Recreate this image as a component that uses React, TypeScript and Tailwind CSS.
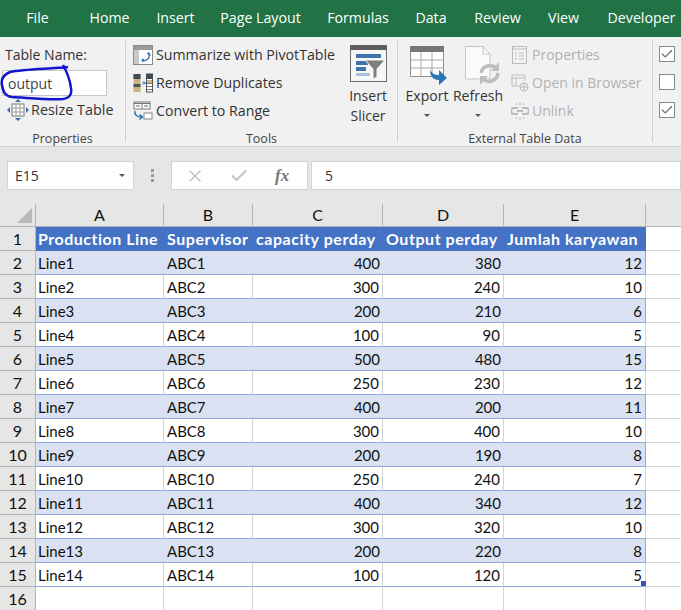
import { X, Check } from "lucide-react";

const rows = [
  ["Line1", "ABC1", 400, 380, 12],
  ["Line2", "ABC2", 300, 240, 10],
  ["Line3", "ABC3", 200, 210, 6],
  ["Line4", "ABC4", 100, 90, 5],
  ["Line5", "ABC5", 500, 480, 15],
  ["Line6", "ABC6", 250, 230, 12],
  ["Line7", "ABC7", 400, 200, 11],
  ["Line8", "ABC8", 300, 400, 10],
  ["Line9", "ABC9", 200, 190, 8],
  ["Line10", "ABC10", 250, 240, 7],
  ["Line11", "ABC11", 400, 340, 12],
  ["Line12", "ABC12", 300, 320, 10],
  ["Line13", "ABC13", 200, 220, 8],
  ["Line14", "ABC14", 100, 120, 5],
];

const tabs = [
  ["File", "w-[75px]"],
  ["Home", "w-[69px]"],
  ["Insert", "w-[63px]"],
  ["Page Layout", "w-[107px]"],
  ["Formulas", "w-[88px]"],
  ["Data", "w-[58px]"],
  ["Review", "w-[75px]"],
  ["View", "w-[57px]"],
  ["Developer", "w-[99px]"],
];

function PivotIcon() {
  return (
    <svg width="20" height="20" viewBox="0 0 20 20" className="shrink-0">
      <rect x="0.5" y="0.5" width="19" height="19" fill="#fff" stroke="#8a8a8a" />
      <rect x="1" y="1" width="18" height="4" fill="#9a9a9a" />
      <rect x="1" y="5" width="5" height="14" fill="#c8c8c8" />
      <path d="M9 15 a5 5 0 0 0 7 -6 M14 9 l2 -1 1 3 M11 14 l-2 1 1 2" fill="none" stroke="#2e75b6" strokeWidth="1.3" />
    </svg>
  );
}

function DuplicatesIcon() {
  return (
    <svg width="20" height="20" viewBox="0 0 20 20" className="shrink-0">
      <rect x="0.5" y="1" width="7" height="18" fill="#c9b37e" />
      <rect x="0.5" y="1" width="7" height="5" fill="#3f4a5a" />
      <rect x="0.5" y="11" width="7" height="3" fill="#4a5565" />
      <rect x="13.5" y="1" width="6" height="18" fill="#fff" stroke="#555" />
      <rect x="13.5" y="1" width="6" height="5" fill="#3f4a5a" />
      <rect x="14" y="7" width="5" height="3" fill="#c9b37e" />
      <path d="M14 10.5h5M14 13.5h5M14 16.5h5" stroke="#777" />
      <path d="M9 10h3M10.5 8.5l2 1.5-2 1.5" fill="none" stroke="#2e75b6" />
    </svg>
  );
}

function ConvertIcon() {
  return (
    <svg width="20" height="20" viewBox="0 0 20 20" className="shrink-0">
      <rect x="1" y="1" width="16" height="7" fill="#fff" stroke="#777" />
      <path d="M1 2.5h16" stroke="#777" />
      <path d="M9 2v6" stroke="#777" />
      <path d="M3 5h4M11 5h4" stroke="#666" />
      <path d="M2 10c-1 4 2 6 7 6M6.5 13.5l3 2.5-3 2.5" fill="none" stroke="#2e75b6" strokeWidth="1.5" />
      <rect x="11" y="12" width="8" height="6" fill="#fff" stroke="#888" />
    </svg>
  );
}

function ResizeIcon() {
  return (
    <svg width="22" height="22" viewBox="0 0 22 22" className="shrink-0">
      <rect x="5" y="5" width="12" height="12" fill="#fff" stroke="#777" />
      <path d="M5 9h12M5 13h12M9 5v12M13 5v12" stroke="#999" />
      <path d="M11 0l3 3H8zM11 22l3-3H8zM0 11l3-3v6zM22 11l-3-3v6z" fill="#3e6fa8" />
    </svg>
  );
}

function SlicerIcon() {
  return (
    <svg width="37" height="37" viewBox="0 0 37 37">
      <rect x="0.5" y="0.5" width="36" height="36" fill="#f7f7f7" stroke="#6d6d6d" />
      <rect x="0" y="0" width="37" height="5" fill="#5f5f5f" />
      <rect x="6" y="9" width="25" height="4" fill="#3f74ad" />
      <rect x="6" y="16" width="12" height="4" fill="#3f74ad" />
      <rect x="6" y="22" width="10" height="4" fill="#3f74ad" />
      <rect x="6" y="28" width="14" height="3" fill="#a9c3de" />
      <path d="M15 15h20l-8 9v8l-4 2v-10z" fill="#7f7f7f" stroke="#f7f7f7" />
    </svg>
  );
}

function ExportIcon() {
  return (
    <svg width="38" height="40" viewBox="0 0 38 40">
      <rect x="0.5" y="0.5" width="33" height="30" fill="#fff" stroke="#8f8f8f" />
      <rect x="0" y="0" width="34" height="6" fill="#767676" />
      <path d="M0 14h34M0 22h34M11 6v25M22 6v25" stroke="#a8a8a8" />
      <path d="M20 24c3 5 7 5 9 5v-5l8 8-8 7v-5c-5 0-9-3-9-10z" fill="#2e75b6" />
    </svg>
  );
}

function RefreshIcon() {
  return (
    <svg width="36" height="40" viewBox="0 0 36 40">
      <path d="M0.5 0.5H18L25 8V33H0.5z" fill="#fafafa" stroke="#c4c4c4" />
      <path d="M18 0.5V8H25" fill="none" stroke="#c4c4c4" />
      <path d="M16 27a9 9 0 0 1 15-5M33 27a9 9 0 0 1-15 6" fill="none" stroke="#bdbdbd" strokeWidth="3.5" />
      <path d="M34 16v9h-8zM15 39v-9h8z" fill="#bdbdbd" />
    </svg>
  );
}

function GreyIcon({ kind }: { kind: string }) {
  return (
    <svg width="18" height="18" viewBox="0 0 18 18" className="shrink-0" fill="none" stroke="#bcbcbc">
      {kind === "props" && (
        <>
          <rect x="1.5" y="0.5" width="14" height="17" />
          <path d="M1.5 3h14M4 7h2M8 7h5M4 10h2M8 10h5M4 13h2M8 13h5" />
        </>
      )}
      {kind === "browser" && (
        <>
          <path d="M10 12H1V1h13v6M1 4h13M5 4v8" />
          <circle cx="13" cy="13" r="4" />
          <path d="M9 13h8M13 9v8" />
        </>
      )}
      {kind === "unlink" && (
        <>
          <path d="M7 6H3a3 3 0 0 0 0 6h4M11 6h4a3 3 0 0 1 0 6h-4M6 9h6" strokeWidth="2" />
          <path d="M9 0v3M9 15v3M5 1l1 2M13 1l-1 2M5 17l1-2M13 17l-1-2" />
        </>
      )}
    </svg>
  );
}

function Checkbox({ checked }: { checked: boolean }) {
  return (
    <div className="flex h-[16px] w-[16px] items-center justify-center border border-[#8a8a8a] bg-white">
      {checked && <Check size={14} strokeWidth={2} className="text-[#666]" />}
    </div>
  );
}

function Caret() {
  return <div className="h-0 w-0 border-x-[3.5px] border-t-[3.5px] border-x-transparent border-t-[#555]" />;
}

function GroupLabel({ children }: { children: string }) {
  return <div className="-mb-[2px] mt-auto text-center text-[12.5px] leading-[18px] text-[#444]">{children}</div>;
}

export default function App() {
  return (
    <div className="relative h-[610px] w-[681px] overflow-hidden bg-[#e6e6e6] font-['Open_Sans',sans-serif] text-[#333]">
      {/* tabs */}
      <div className="flex h-[37px] items-center bg-[#217346] pb-[1px] text-[14.2px] text-white">
        {tabs.map(([t, w]) => (
          <div key={t} className={`${w} shrink-0 whitespace-nowrap text-center`}>
            {t}
          </div>
        ))}
      </div>

      {/* ribbon */}
      <div className="flex h-[110px] border-b border-[#d0d0d0] bg-[#f1f1f1]">
        {/* Properties */}
        <div className="flex w-[125px] shrink-0 flex-col">
          <div className="pl-[5px] pt-[8px] text-[14px] leading-[19px]">Table Name:</div>
          <div className="ml-[2px] mt-[6px] h-[26px] w-[105px] border border-[#c6c6c6] bg-white pl-[5px] text-[14px] leading-[25px] text-[#444]">output</div>
          <div className="mt-[3px] flex items-center gap-[2px] pl-[7px] text-[14.4px] leading-[22px]">
            <ResizeIcon />
            <span>Resize Table</span>
          </div>
          <GroupLabel>Properties</GroupLabel>
        </div>
        <div className="my-[4px] w-px bg-[#cfcfcf]" />

        {/* Tools */}
        <div className="flex w-[271px] shrink-0 flex-col">
          <div className="flex pl-[7px] pt-[8px]">
            <div className="flex w-[213px] shrink-0 flex-col gap-[8px] text-[14.2px] leading-[20px]">
              <div className="flex items-center gap-[3px]">
                <PivotIcon />
                <span className="whitespace-nowrap">Summarize with PivotTable</span>
              </div>
              <div className="flex items-center gap-[3px]">
                <DuplicatesIcon />
                <span>Remove Duplicates</span>
              </div>
              <div className="flex items-center gap-[3px]">
                <ConvertIcon />
                <span>Convert to Range</span>
              </div>
            </div>
            <div className="flex w-[44px] shrink-0 flex-col items-center text-[14px] leading-[20px]">
              <SlicerIcon />
              <div className="mt-[4px]">Insert</div>
              <div>Slicer</div>
            </div>
          </div>
          <GroupLabel>Tools</GroupLabel>
        </div>
        <div className="my-[4px] w-px bg-[#cfcfcf]" />

        {/* External Table Data */}
        <div className="flex w-[254px] shrink-0 flex-col">
          <div className="flex pl-[4px] pt-[9px]">
            <div className="flex w-[50px] shrink-0 flex-col items-center text-[14px] leading-[20px]">
              <div className="h-[40px] pl-[4px]">
                <ExportIcon />
              </div>
              <div>Export</div>
              <div className="mt-[8px]">
                <Caret />
              </div>
            </div>
            <div className="flex w-[52px] shrink-0 flex-col items-center text-[14px] leading-[20px]">
              <div className="h-[40px] pl-[10px]">
                <RefreshIcon />
              </div>
              <div>Refresh</div>
              <div className="mt-[8px]">
                <Caret />
              </div>
            </div>
            <div className="-mt-[1px] ml-[7px] flex flex-col gap-[8px] text-[14px] leading-[20px] text-[#b1b1b1]">
              <div className="flex items-center gap-[3px]">
                <GreyIcon kind="props" />
                <span>Properties</span>
              </div>
              <div className="flex items-center gap-[3px]">
                <GreyIcon kind="browser" />
                <span className="whitespace-nowrap">Open in Browser</span>
              </div>
              <div className="flex items-center gap-[3px]">
                <GreyIcon kind="unlink" />
                <span>Unlink</span>
              </div>
            </div>
          </div>
          <GroupLabel>External Table Data</GroupLabel>
        </div>
        <div className="my-[4px] w-px bg-[#cfcfcf]" />

        <div className="flex flex-col gap-[12px] pl-[6px] pt-[9px]">
          <Checkbox checked />
          <Checkbox checked={false} />
          <Checkbox checked />
        </div>
      </div>

      {/* formula bar */}
      <div className="flex h-[57px] items-start bg-[#e6e6e6] pt-[14px]">
        <div className="ml-[7px] flex h-[29px] w-[127px] items-center justify-between border border-[#d4d4d4] bg-white pl-[7px] pr-[8px] text-[14px]">
          <span>E15</span>
          <Caret />
        </div>
        <div className="flex h-[29px] w-[37px] flex-col items-center justify-center gap-[2px]">
          <div className="h-[3px] w-[3px] bg-[#9c9c9c]" />
          <div className="h-[3px] w-[3px] bg-[#9c9c9c]" />
          <div className="h-[3px] w-[3px] bg-[#9c9c9c]" />
        </div>
        <div className="flex h-[29px] w-[137px] items-center gap-[24px] border border-[#d4d4d4] bg-white pl-[13px]">
          <X size={20} strokeWidth={2} className="text-[#c4c4c4]" />
          <Check size={20} strokeWidth={2.4} className="text-[#c4c4c4]" />
          <span className="ml-[2px] font-['Liberation_Serif',serif] text-[17px] font-bold italic text-[#777]">fx</span>
        </div>
        <div className="ml-[3px] flex h-[29px] flex-1 items-center border border-[#d4d4d4] bg-white pl-[13px] text-[14px]">5</div>
      </div>

      {/* sheet */}
      <div className="grid grid-cols-[36px_128px_89px_130px_121px_142px_35px] grid-rows-[23px_repeat(15,24px)_24px] bg-white font-['Lato',sans-serif] text-[15px] text-[#111]">
        <div className="flex items-end justify-end border-b border-r border-[#b4b4b4] bg-[#e6e6e6] p-[3px]">
          <div className="h-0 w-0 border-b-[15px] border-l-[15px] border-b-[#b8b8b8] border-l-transparent" />
        </div>
        {["A", "B", "C", "D", "E"].map((c) => (
          <div key={c} className="border-b border-r border-[#b4b4b4] bg-[#e6e6e6] text-center text-[16px] leading-[22px]">
            {c}
          </div>
        ))}
        <div className="border-b border-[#b4b4b4] bg-[#e6e6e6]" />

        {/* header */}
        <div className="border-b border-r border-[#b4b4b4] bg-[#e6e6e6] text-center text-[16px] leading-[23px]">1</div>
        <div className="whitespace-nowrap bg-[#4472c4] pl-[2px] text-[16px] font-bold leading-[23px] tracking-[0.5px] text-white">Production Line</div>
        {["Supervisor", "capacity perday", "Output perday", "Jumlah karyawan"].map((h) => (
          <div key={h} className="whitespace-nowrap bg-[#4472c4] pl-[3px] text-[16px] font-bold leading-[23px] tracking-[0.55px] text-white">
            {h}
          </div>
        ))}
        <div className="border-b border-[#d4d4d4]" />

        {rows.map((r, i) => {
          const band = i % 2 === 0;
          const cell = band
            ? "border-b border-[#8ea9db] bg-[#d9e1f2] leading-[24px]"
            : "border-b border-r border-b-[#8ea9db] border-r-[#d4d4d4] leading-[24px]";
          return (
            <div key={r[0]} className="contents">
              <div className="border-b border-r border-[#b4b4b4] bg-[#e6e6e6] text-center text-[16px] leading-[23px]">{i + 2}</div>
              <div className={`${cell} pl-[2px]`}>{r[0]}</div>
              <div className={`${cell} pl-[3px]`}>{r[1]}</div>
              <div className={`${cell} pr-[3px] text-right`}>{r[2]}</div>
              <div className={`${cell} pr-[3px] text-right`}>{r[3]}</div>
              <div className={`${cell} border-r border-r-[#8ea9db] pr-[3px] text-right`}>{r[4]}</div>
              <div className="border-b border-[#d4d4d4]" />
            </div>
          );
        })}

        <div className="border-r border-[#b4b4b4] bg-[#e6e6e6] text-center text-[16px] leading-[23px]">16</div>
        <div className="border-r border-[#d4d4d4]" />
        <div className="border-r border-[#d4d4d4]" />
        <div className="border-r border-[#d4d4d4]" />
        <div className="border-r border-[#d4d4d4]" />
        <div className="border-r border-[#d4d4d4]" />
        <div />
      </div>

      {/* table resize handle */}
      <div className="absolute left-[641px] top-[581px] h-[5px] w-[5px] bg-[#3f51b5]" />

      {/* hand-drawn ink circle over the table name */}
      <svg width="75" height="40" viewBox="0 0 75 40" className="absolute left-0 top-[64px]" fill="none">
        <path
          d="M68 3C50 5 25 5 10 8 3 11 1 16 2 21c1 7 3 11 10 12 18 1 38 3 51 2 7-1 9-5 8-11-1-8-4-16-8-23"
          stroke="#1515d0"
          strokeWidth="2.5"
        />
      </svg>
    </div>
  );
}
